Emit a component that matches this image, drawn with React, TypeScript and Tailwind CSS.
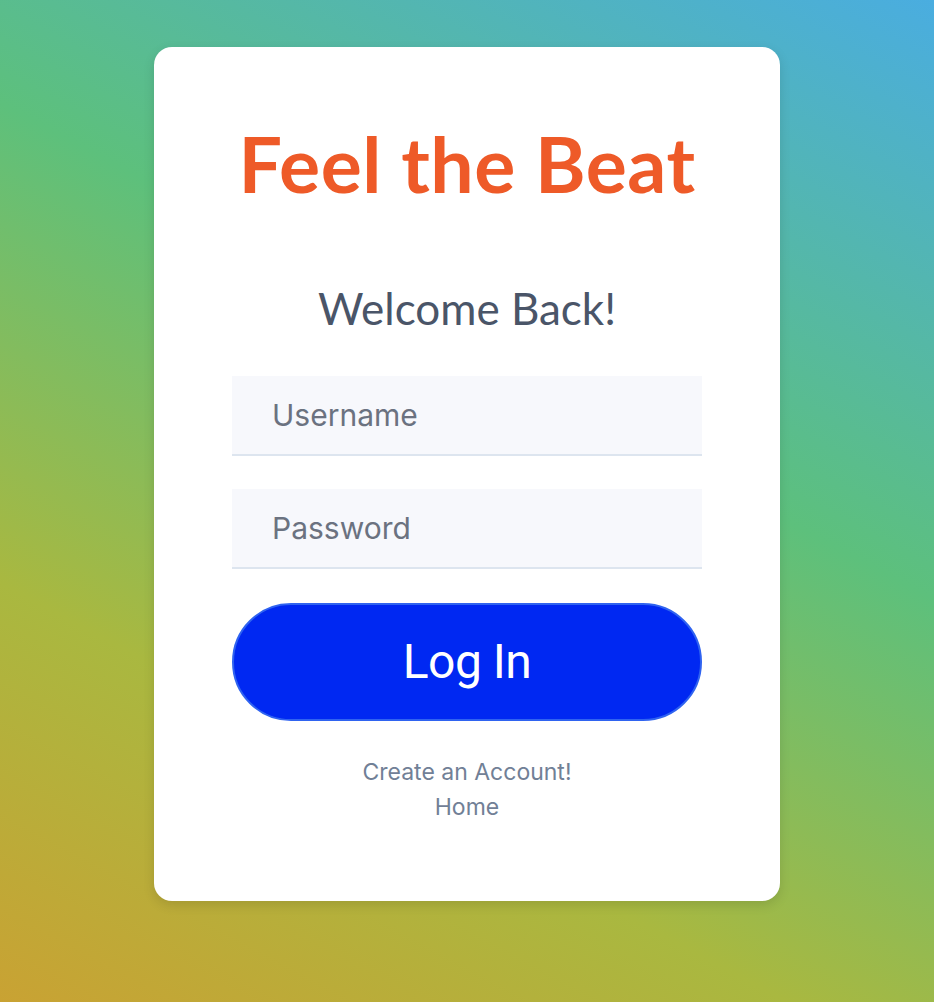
import React from "react";

export default function App() {
  return (
    <div className="w-full h-[1002px] overflow-hidden flex justify-center">
      <div className="absolute inset-0 -z-10 bg-[linear-gradient(28deg,#c9a233_0%,#a9b840_28%,#5dc07c_60%,#4aade0_100%)]" />
      <div className="mt-[47px] w-[626px] h-[854px] bg-white rounded-[18px] shadow-[0_4px_12px_rgba(0,0,0,0.12)] flex flex-col items-center px-[78px]">
        <h1 className="mt-[70px] text-[77px] leading-[92px] font-bold text-[#ee5a28] font-['Lato','Noto_Sans',sans-serif] tracking-[0.5px]">
          Feel the Beat
        </h1>
        <h2 className="mt-[73px] text-[44px] leading-[52px] text-[#4a5568] font-['Lato','Noto_Sans',sans-serif]">
          Welcome Back!
        </h2>
        <div className="mt-[42px] w-full flex flex-col gap-[33px]">
          <input
            placeholder="Username"
            className="w-full h-[80px] bg-[#f7f8fc] border-b-2 border-[#dde5ef] px-[40px] text-[30px] font-['Inter','Liberation_Sans',sans-serif] text-[#374151] placeholder:text-[#6b7280] outline-none"
          />
          <input
            placeholder="Password"
            type="password"
            className="w-full h-[80px] bg-[#f7f8fc] border-b-2 border-[#dde5ef] px-[40px] text-[30px] font-['Inter','Liberation_Sans',sans-serif] text-[#374151] placeholder:text-[#6b7280] outline-none"
          />
        </div>
        <button className="mt-[34px] w-full h-[118px] shrink-0 rounded-full bg-[#0028f2] border-2 border-[#2f63f0] text-white text-[48px] tracking-[-0.5px] font-['Roboto','Liberation_Sans',sans-serif]">
          Log In
        </button>
        <div className="mt-[34px] flex flex-col items-center text-[23px] leading-[35px] text-[#718096] font-['Inter','Liberation_Sans',sans-serif]">
          <a>Create an Account!</a>
          <a>Home</a>
        </div>
      </div>
    </div>
  );
}
